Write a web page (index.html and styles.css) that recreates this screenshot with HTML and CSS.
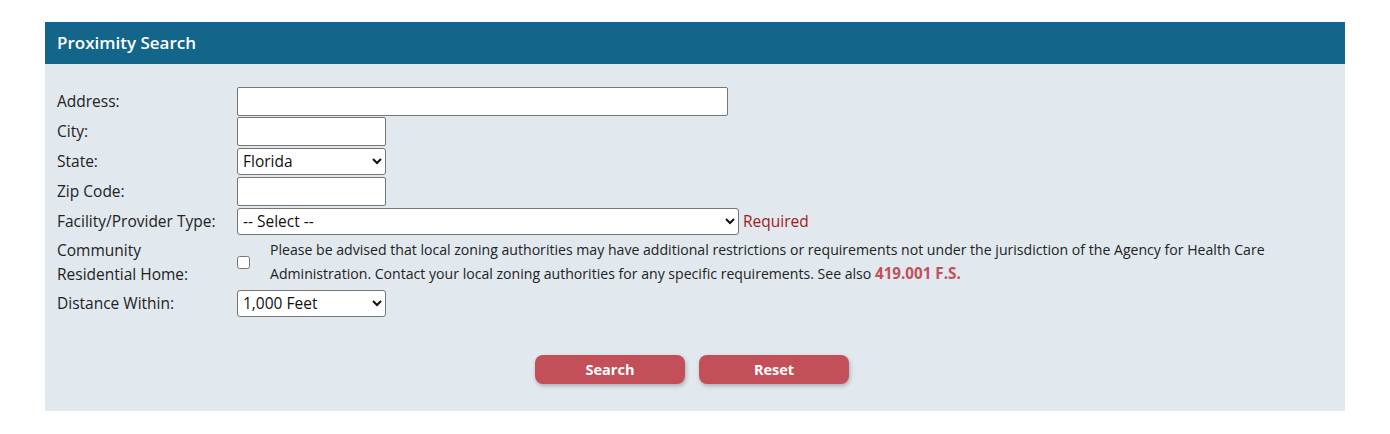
FILE: index.html
```html
<!DOCTYPE html>
<html>
<head>
<meta charset="utf-8">
<link rel="stylesheet" href="styles.css">
</head>
<body>
<div class="panel">
  <div class="panel-head">Proximity Search</div>
  <div class="panel-body">
    <div class="form">
      <div class="row">
        <label class="lbl">Address:</label>
        <div class="ctl"><input class="txt wide" type="text"></div>
      </div>
      <div class="row">
        <label class="lbl">City:</label>
        <div class="ctl"><input class="txt short" type="text"></div>
      </div>
      <div class="row">
        <label class="lbl">State:</label>
        <div class="ctl"><select class="sel short"><option>Florida</option></select></div>
      </div>
      <div class="row">
        <label class="lbl">Zip Code:</label>
        <div class="ctl"><input class="txt short" type="text"></div>
      </div>
      <div class="row">
        <label class="lbl">Facility/Provider Type:</label>
        <div class="ctl"><select class="sel long"><option>-- Select --</option></select><span class="req">Required</span></div>
      </div>
      <div class="row tall">
        <label class="lbl two">Community<br>Residential Home:</label>
        <div class="ctl">
          <input class="chk" type="checkbox">
          <p class="note">Please be advised that local zoning authorities may have additional restrictions or requirements not under the jurisdiction of the Agency for Health Care Administration. Contact your local zoning authorities for any specific requirements. See also <a class="lnk" href="#">419.001 F.S.</a></p>
        </div>
      </div>
      <div class="row">
        <label class="lbl">Distance Within:</label>
        <div class="ctl"><select class="sel short"><option>1,000 Feet</option></select></div>
      </div>
    </div>
    <div class="actions">
      <button class="btn">Search</button>
      <button class="btn">Reset</button>
    </div>
  </div>
</div>
</body>
</html>
```

FILE: styles.css
```css
html, body {
  margin: 0;
  padding: 0;
  background: #ffffff;
}
body {
  padding: 22px 45px 0 45px;
  font-family: "Open Sans", "Noto Sans", sans-serif;
  color: #222;
}
.panel {
  width: 1300px;
}
.panel-head {
  background: #136589;
  color: #fff;
  height: 42px;
  line-height: 42px;
  padding-left: 12px;
  font-size: 17px;
  font-weight: 600;
}
.panel-body {
  background: #e1e9ef;
  padding: 22px 12px 27px 12px;
}
.form {
  display: flex;
  flex-direction: column;
}
.row {
  display: flex;
  align-items: center;
  height: 30px;
}
.row.tall {
  height: 52px;
}
.lbl {
  width: 180px;
  flex: none;
  font-size: 15.5px;
  line-height: 24px;
}
.ctl {
  display: flex;
  align-items: center;
}
.txt, .sel {
  box-sizing: border-box;
  height: 29px;
  border: 1px solid #767676;
  border-radius: 2px;
  background: #fff;
  font-family: "Open Sans", "Noto Sans", sans-serif;
  font-size: 15.5px;
  color: #111;
  padding: 0 1px;
  margin: 0;
}
.sel {
  height: 27px;
  border-radius: 3px;
}
.wide { width: 491px; }
.short { width: 149px; }
.long { width: 502px; }
.req {
  color: #a11a1a;
  font-size: 15.5px;
  margin-left: 4px;
}
.chk {
  width: 13px;
  height: 13px;
  margin: 0 20px 0 0;
  flex: none;
}
.note {
  margin: 0;
  font-size: 14.1px;
  line-height: 24px;
  width: 1020px;
}
.lnk {
  color: #c44e59;
  font-weight: 700;
  font-size: 15.2px;
  line-height: 1;
  text-decoration: none;
}
.actions {
  display: flex;
  justify-content: center;
  gap: 14px;
  margin-top: 37px;
  padding-right: 6px;
}
.btn {
  width: 150px;
  height: 29px;
  border: none;
  border-radius: 8px;
  background: #c34f59;
  color: #fff;
  font-family: "Open Sans", "Noto Sans", sans-serif;
  font-weight: 700;
  font-size: 14.5px;
  box-shadow: 1px 2px 4px rgba(0,0,0,0.25);
}
```
